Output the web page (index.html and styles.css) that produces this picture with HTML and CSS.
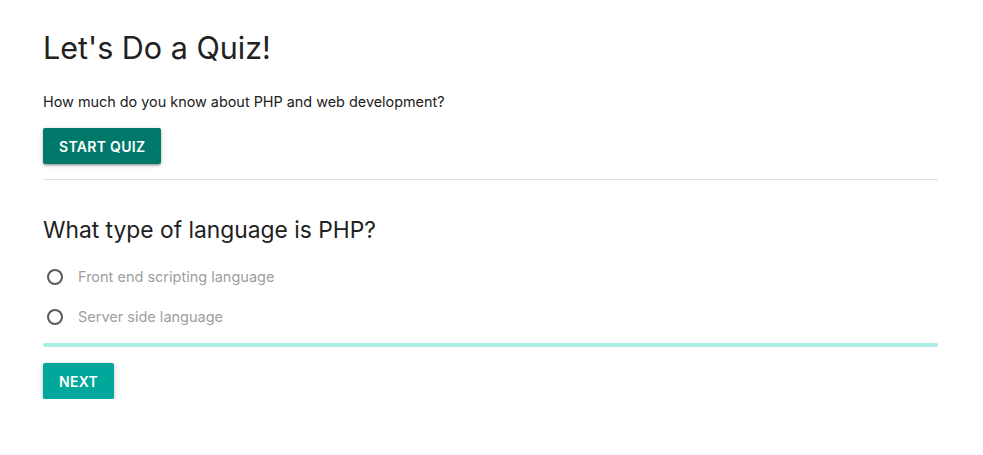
FILE: index.html
```html
<!DOCTYPE html>
<html>
<head>
<meta charset="utf-8">
<link rel="stylesheet" href="styles.css">
</head>
<body>
<div class="container">
  <h1 class="title">Let's Do a Quiz!</h1>
  <p class="lead">How much do you know about PHP and web development?</p>
  <button class="btn btn-dark">START QUIZ</button>
  <div class="divider"></div>
  <h2 class="question">What type of language is PHP?</h2>
  <label class="option"><span class="radio"></span><span>Front end scripting language</span></label>
  <label class="option"><span class="radio"></span><span>Server side language</span></label>
  <div class="progress"></div>
  <button class="btn btn-light">NEXT</button>
</div>
</body>
</html>
```
FILE: styles.css
```css
html, body {
  margin: 0;
  padding: 0;
  background: #fff;
}
body {
  font-family: Inter, "Noto Sans", sans-serif;
  color: #212121;
}
.container {
  width: 895px;
  margin-left: 43px;
  padding-top: 26px;
  display: flex;
  flex-direction: column;
  align-items: flex-start;
}
.title {
  font-size: 30.5px;
  font-weight: 400;
  line-height: 44px;
  margin: 0;
  color: #212121;
}
.lead {
  font-size: 14.4px;
  line-height: 20px;
  margin: 22px 0 16px;
  color: #212121;
}
.btn {
  border: none;
  border-radius: 2px;
  height: 36px;
  padding: 0 16px;
  font-family: Inter, sans-serif;
  font-weight: 600;
  font-size: 14px;
  letter-spacing: 0.3px;
  color: #fff;
  box-shadow: 0 2px 2px 0 rgba(0,0,0,0.14), 0 3px 1px -2px rgba(0,0,0,0.12), 0 1px 5px 0 rgba(0,0,0,0.2);
}
.btn-dark { background: #00796b; }
.btn-light { background: #00a79a; }
.divider {
  align-self: stretch;
  height: 1px;
  background: #e0e0e0;
  margin-top: 15px;
}
.question {
  font-size: 22.8px;
  font-weight: 400;
  line-height: 32px;
  margin: 34px 0 18px;
  color: #212121;
}
.option {
  display: flex;
  align-items: center;
  height: 25px;
  margin: 0 0 15px;
  font-size: 14.5px;
  color: #9e9e9e;
}
.option:last-of-type {
  margin-bottom: 14px;
}
.radio {
  width: 12px;
  height: 12px;
  border: 2px solid #5a5a5a;
  border-radius: 50%;
  margin: 0 15px 0 4px;
}
.progress {
  align-self: stretch;
  height: 4px;
  background: #acece6;
  border-radius: 2px;
  margin: 0 0 16px;
}
```
